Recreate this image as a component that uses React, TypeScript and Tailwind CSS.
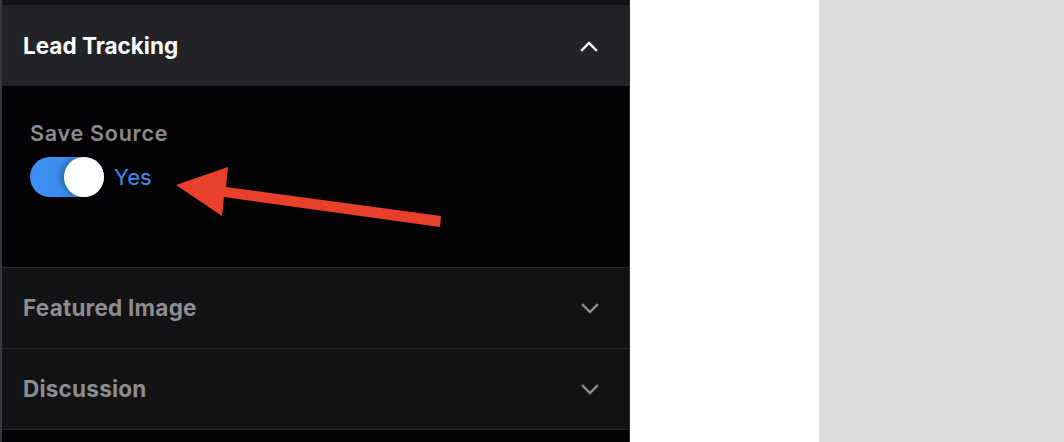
import React from 'react';

const Chevron: React.FC<{ up?: boolean; className?: string }> = ({ up, className }) => (
  <svg width="18" height="12" viewBox="0 0 18 12" fill="none" className={className}>
    <path
      d={up ? 'M2 10 L9 3 L16 10' : 'M2 3 L9 10 L16 3'}
      stroke="currentColor"
      strokeWidth="2.4"
      strokeLinecap="square"
      strokeLinejoin="miter"
    />
  </svg>
);

const Row: React.FC<{ title: string }> = ({ title }) => (
  <div className="h-[81px] flex items-center justify-between pl-[21px] pr-[30px] bg-[#131316] border-b border-[#2a2a2d]">
    <span className="text-[22.5px] font-bold tracking-[0.01em] text-[#8d8d90]">{title}</span>
    <Chevron className="text-[#8d8d90]" />
  </div>
);

const App: React.FC = () => {
  return (
    <div className="flex h-[442px] w-full overflow-hidden" style={{ fontFamily: 'Inter, "Noto Sans", sans-serif' }}>
      <aside className="relative w-[630px] shrink-0 bg-[#030305] border-l-2 border-r border-l-[#36373b] border-r-[#2a2a2d] flex flex-col">
        <div className="h-[5px] bg-[#131316]" />
        <div className="h-[81px] flex items-center justify-between pl-[21px] pr-[31px] bg-[#222326]">
          <span className="text-[22.5px] font-bold text-white">Lead Tracking</span>
          <Chevron up className="text-white" />
        </div>
        <div className="h-[182px] pt-[34px] pl-[28px] border-b border-[#2a2a2d]">
          <div className="text-[21.5px] font-semibold tracking-[0.035em] text-[#8b8b8e] leading-[26px]">Save Source</div>
          <div className="flex items-center gap-[10px] mt-[11px]">
            <div className="w-[74px] h-[40px] rounded-full bg-[#3d8ef0] flex justify-end">
              <div className="w-[40px] h-[40px] rounded-full bg-white shadow-[-4px_0_6px_rgba(0,0,0,0.25)]" />
            </div>
            <span className="text-[22px] text-[#3d8ef0]">Yes</span>
          </div>
        </div>
        <Row title="Featured Image" />
        <Row title="Discussion" />
        <svg
          className="absolute left-0 top-0 pointer-events-none"
          width="630"
          height="442"
          viewBox="-2 0 630 442"
        >
          <polygon
            points="172,185 224,167 222,187 437,216 436,227 220,197 218,216"
            fill="#e8402a"
          />
        </svg>
      </aside>
      <div className="w-[189px] shrink-0 bg-white" />
      <div className="flex-1 bg-[#dcdcdc]" />
    </div>
  );
};

export default App;
